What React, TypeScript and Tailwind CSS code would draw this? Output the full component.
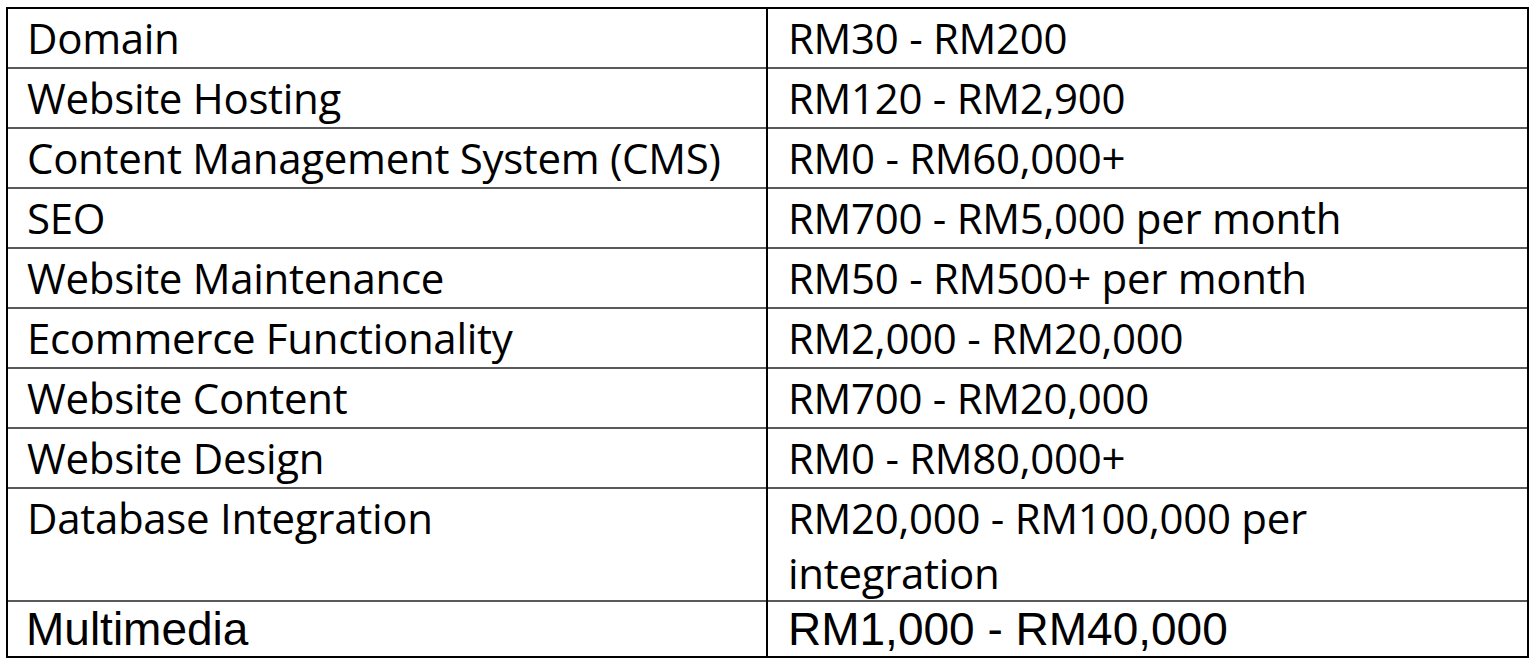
const rows: { item: string; cost: string[] }[] = [
  { item: "Domain", cost: ["RM30 - RM200"] },
  { item: "Website Hosting", cost: ["RM120 - RM2,900"] },
  { item: "Content Management System (CMS)", cost: ["RM0 - RM60,000+"] },
  { item: "SEO", cost: ["RM700 - RM5,000 per month"] },
  { item: "Website Maintenance", cost: ["RM50 - RM500+ per month"] },
  { item: "Ecommerce Functionality", cost: ["RM2,000 - RM20,000"] },
  { item: "Website Content", cost: ["RM700 - RM20,000"] },
  { item: "Website Design", cost: ["RM0 - RM80,000+"] },
  { item: "Database Integration", cost: ["RM20,000 - RM100,000 per", "integration"] },
];

export default function App() {
  return (
    <div className="min-h-[664px] w-full bg-white pl-[6px] pt-[7px] text-black">
      <div className="w-[1523px] border-2 border-black">
        {rows.map((r) => {
          const pad = r.cost.length > 1 ? "pt-[1px]" : "pt-[1px] pb-[2px]";
          return (
            <div
              key={r.item}
              className="grid grid-cols-[760px_1fr] border-b-2 border-[#5a5a5a] font-['Open_Sans',sans-serif] text-[42px] leading-[55px] tracking-[-0.3px]"
            >
              <div className={`relative -mb-[2px] border-r-2 border-black pl-[19px] ${pad}`}>{r.item}</div>
              <div className={`pl-[20px] ${pad}`}>
                {r.cost.map((line) => (
                  <div key={line}>{line}</div>
                ))}
              </div>
            </div>
          );
        })}
        <div className="grid grid-cols-[760px_1fr] font-['Liberation_Sans',Arial,sans-serif] text-[46px] leading-[54px]">
          <div className="border-r-2 border-black pl-[18px]">Multimedia</div>
          <div className="pl-[20px]">RM1,000 - RM40,000</div>
        </div>
      </div>
    </div>
  );
}
